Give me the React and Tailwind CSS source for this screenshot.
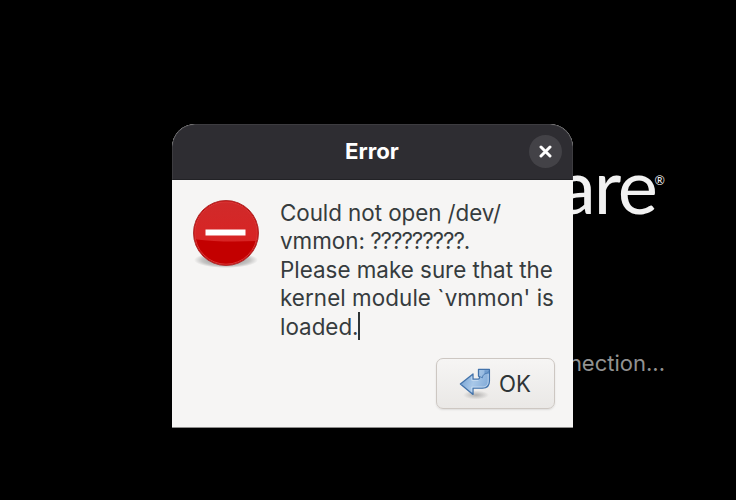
function ErrorIcon() {
  return (
    <svg width="76" height="76" viewBox="0 0 76 76" className="block shrink-0">
      <defs>
        <linearGradient id="gloss" x1="0" y1="0" x2="0" y2="1">
          <stop offset="0" stopColor="#d02a2a" />
          <stop offset="1" stopColor="#d82424" />
        </linearGradient>
        <radialGradient id="discShadow">
          <stop offset="0" stopColor="#000" stopOpacity="0.5" />
          <stop offset="0.75" stopColor="#000" stopOpacity="0.2" />
          <stop offset="1" stopColor="#000" stopOpacity="0" />
        </radialGradient>
        <clipPath id="disc">
          <circle cx="38" cy="37" r="31" />
        </clipPath>
      </defs>
      <ellipse cx="38" cy="64" rx="32" ry="8" fill="url(#discShadow)" />
      <circle cx="38" cy="37" r="32.5" fill="#c30000" stroke="#b03030" strokeWidth="1" />
      <path clipPath="url(#disc)" d="M5 4H71V45C48 46 25 46 5 43Z" fill="url(#gloss)" />
      <circle cx="38" cy="37" r="31.2" fill="none" stroke="#df4848" strokeWidth="1" opacity="0.75" />
      <rect x="17.5" y="33.5" width="40" height="6" fill="#fff" />
    </svg>
  );
}

function ReturnIcon() {
  return (
    <svg width="34" height="34" viewBox="0 0 34 34" className="block shrink-0">
      <defs>
        <linearGradient id="arrow" x1="0" y1="0" x2="1" y2="0.3">
          <stop offset="0" stopColor="#6a9ace" />
          <stop offset="0.55" stopColor="#a9c8e8" />
          <stop offset="1" stopColor="#86aeda" />
        </linearGradient>
        <radialGradient id="arrowShadow">
          <stop offset="0" stopColor="#000" stopOpacity="0.25" />
          <stop offset="1" stopColor="#000" stopOpacity="0" />
        </radialGradient>
      </defs>
      <ellipse cx="18" cy="28" rx="13" ry="4.5" fill="url(#arrowShadow)" />
      <path
        d="M20.5 2.4H31.4V14C31.4 18.8 28.5 21.2 24.5 21.2H15V27.4L2.4 17L15 7V12.2H19C22 12.2 22.2 10.4 20.5 9Z"
        fill="url(#arrow)"
        stroke="#4272aa"
        strokeWidth="1.3"
        strokeLinejoin="round"
      />
      <path d="M26.5 3.2H30.6V6C30 6.4 28 6.5 26.5 7Z" fill="#6f9bcd" />
      <path d="M20.5 9L24.4 10.8C24.4 8 26.5 6.8 28.5 6.4C30 6 31 5 31.2 3.4" fill="none" stroke="#4272aa" strokeWidth="0.8" />
      <path d="M13.8 9.5V13.4H20.5M13.8 24.8V20H24.4C28 20 30.2 17.8 30.2 14V7" fill="none" stroke="#cfe1f3" strokeWidth="0.9" opacity="0.8" />
    </svg>
  );
}

function Wordmark() {
  return (
    <svg width="106" height="56" viewBox="560 165 106 56" className="block overflow-visible">
      <g fill="#f2f2f2" fontFamily="Lato, sans-serif">
        <text x="558" y="214" fontSize="76" textLength="100" lengthAdjust="spacing">are</text>
        <text x="654.5" y="184.5" fontSize="12.5">®</text>
      </g>
    </svg>
  );
}

export default function App() {
  return (
    <div className="relative h-[500px] w-[736px] overflow-hidden bg-black font-['Inter',sans-serif]">
      <div className="flex flex-col items-end pr-[71px] pt-[165px]">
        <div className="-mr-px">
          <Wordmark />
        </div>
        <div className="mt-[128px] text-[22px] leading-[28px] text-[#929292]">nection...</div>
      </div>

      <div className="absolute left-[172px] top-[124px] flex h-[304px] w-[401px] flex-col overflow-hidden rounded-t-[23px] border-b border-[#8e8d8c] bg-[#f6f5f4]">
        <header className="-mb-px grid h-[56px] shrink-0 grid-cols-[1fr_auto_1fr] items-center rounded-t-[23px] border border-[#3d3c40] border-b-[#222226] bg-[#2e2d32] px-[10px] pb-px">
          <span />
          <h1 className="-ml-px -mt-px text-[22.2px] font-bold leading-[28px] text-white">Error</h1>
          <button className="flex size-[33px] items-center justify-center justify-self-end rounded-full bg-[#434247]">
            <svg width="13" height="13" viewBox="0 0 13 13">
              <path d="M2 2L11 11M11 2L2 11" stroke="#fff" strokeWidth="3" strokeLinecap="round" />
            </svg>
          </button>
        </header>
        <main className="flex pl-4 pt-[17px]">
          <ErrorIcon />
          <p className="ml-4 mt-[2.5px] whitespace-nowrap text-[22.4px] leading-[28.5px] text-[#363c3e]">
            <span className="tracking-[-0.06px]">Could not open /dev/</span>
            <br />
            vmmon: <span className="ml-[-1px] tracking-[-1.05px]">?????????</span>.
            <br />
            Please make sure that the
            <br />
            <span className="tracking-[0.07px]">kernel module `vmmon' is</span>
            <br />
            loaded.<span className="-ml-px -mt-[5px] inline-block h-[28px] w-[2px] bg-[#2e3436] align-middle" />
          </p>
        </main>
        <footer className="mt-auto flex justify-end pb-[18px] pr-[18px]">
          <button className="flex h-[51px] w-[119px] items-center rounded-[7px] border border-[#cdc7c2] bg-linear-to-b from-[#f6f5f4] to-[#eae8e6] pl-[21px] text-[22.2px] text-[#2e3436] shadow-[0_1px_2px_rgba(0,0,0,0.1)]">
            <ReturnIcon />
            <span className="ml-[7px]">OK</span>
          </button>
        </footer>
      </div>
    </div>
  );
}
